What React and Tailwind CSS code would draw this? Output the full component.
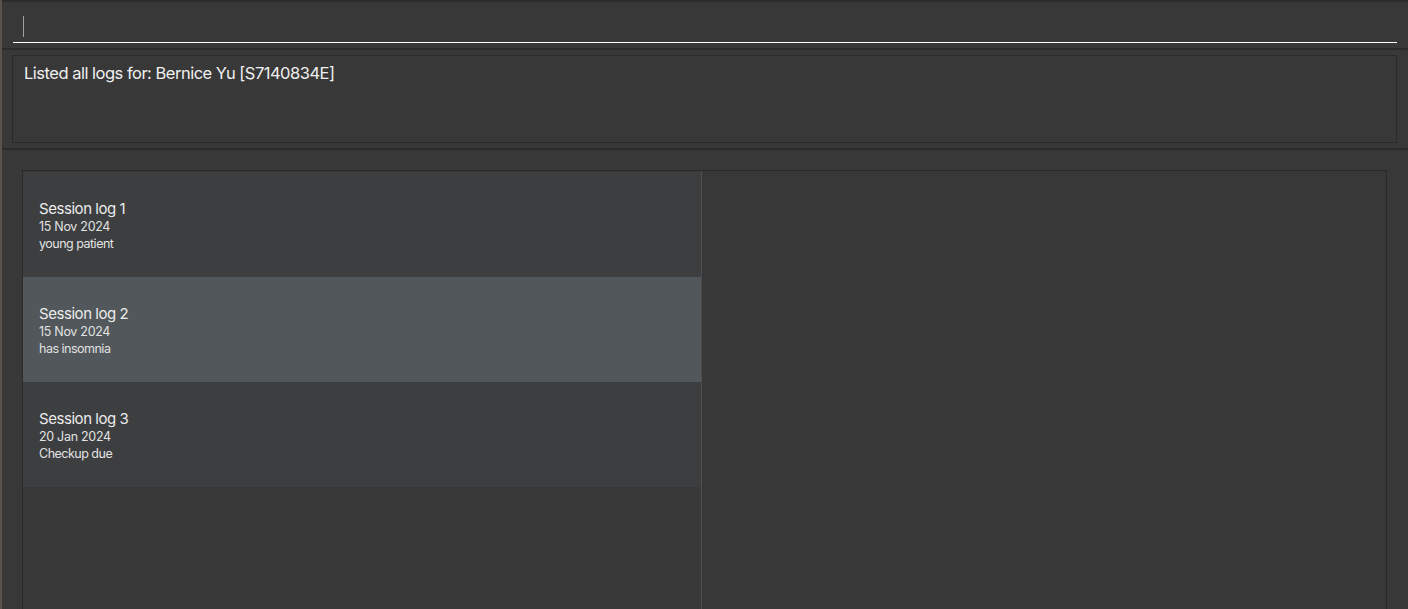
import React from 'react';

const logs = [
  { title: 'Session log 1', date: '15 Nov 2024', note: 'young patient' },
  { title: 'Session log 2', date: '15 Nov 2024', note: 'has insomnia', selected: true },
  { title: 'Session log 3', date: '20 Jan 2024', note: 'Checkup due' },
];

function LogCell({ log }) {
  return (
    <div
      className={`h-[105px] flex flex-col justify-center pl-4 pt-[3px] ${
        log.selected ? 'bg-[#51575a]' : 'bg-[#3c3e40]'
      }`}
    >
      <div className="text-[15px] leading-[18px] tracking-[-0.45px] text-[#ececec]">{log.title}</div>
      <div className="text-[12.5px] leading-[17px] tracking-[-0.3px] text-[#e2e2e2]">{log.date}</div>
      <div className="text-[12.5px] leading-[17px] tracking-[-0.5px] text-[#e2e2e2]">{log.note}</div>
    </div>
  );
}

export default function App() {
  return (
    <div
      className="h-[609px] w-full overflow-hidden bg-[#383838] border-l-2 border-[#5a524d] flex flex-col"
      style={{ fontFamily: 'Inter, "Noto Sans", sans-serif' }}
    >
      <div className="border-t-2 border-[#2c2c2c] h-[48px] pl-[11px] pr-[11px] pt-[13px]">
        <div className="h-[28px] border-b border-white flex items-start pl-[10px]">
          <div className="w-px h-[21px] bg-[#a0a0a0] mt-[1px]" />
        </div>
      </div>

      <div className="border-t-2 border-[#2b2b2b] h-[100px] pt-[5px] pl-[10px] pr-[11px]">
        <div className="h-[88px] border border-[#2a2a2a] px-[11px] pt-[5px]">
          <p className="text-[16.5px] leading-[24px] tracking-[-0.5px] text-[#f0f0f0]">
            Listed all logs for: Bernice Yu [S7140834E]
          </p>
        </div>
      </div>

      <div className="border-t-2 border-[#2b2b2b] flex-1 pt-[20px] pl-[20px] pr-[21px] flex">
        <div className="flex-1 border-t border-l border-r border-[#2a2a2a] flex">
          <div className="w-[678px] flex flex-col pt-px">
            {logs.map((log) => (
              <LogCell key={log.title} log={log} />
            ))}
          </div>
          <div className="w-px bg-[#4e4e4e]" />
          <div className="flex-1 bg-[#383838]" />
        </div>
      </div>
    </div>
  );
}
